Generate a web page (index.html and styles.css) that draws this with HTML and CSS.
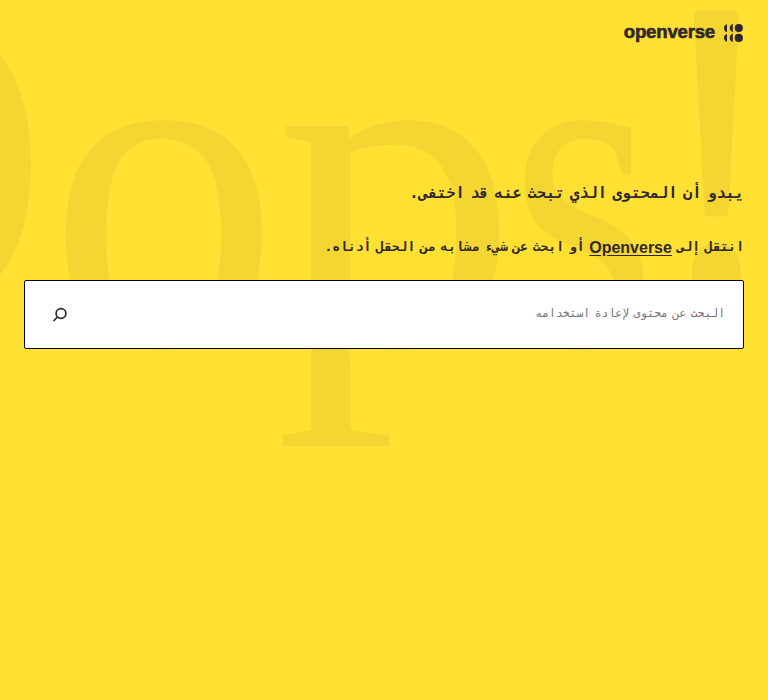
FILE: index.html
```html
<!DOCTYPE html>
<html lang="ar" dir="rtl">
<head>
<meta charset="utf-8">
<title>Openverse</title>
<link rel="stylesheet" href="styles.css">
</head>
<body>
<svg class="oops" viewBox="0 0 768 700" direction="ltr" aria-hidden="true">
  <text transform="translate(-294 321)">O</text>
  <text transform="translate(48 345) scale(.97 1)">o</text>
  <text transform="translate(275 345) scale(1.02 1)">p</text>
  <text transform="translate(509 345) scale(.8 1)">s</text>
  <text class="bang" transform="translate(660 291) scale(.85 1.05)">!</text>
</svg>
<header class="header">
  <a class="brand" href="#">
    <svg class="mark" viewBox="0 0 20 18" aria-hidden="true">
      <path d="M4 0.2a4.1 4.1 0 0 0 0 7.9zM4 9.9a4.1 4.1 0 0 0 0 7.9zM9.8 0a4.3 4.3 0 0 0 0 8.2zM9.8 9.8a4.3 4.3 0 0 0 0 8.2z"/>
      <circle cx="15.8" cy="4.1" r="4.1"/><circle cx="15.8" cy="13.9" r="4.1"/>
    </svg>
    <span class="wordmark">openverse</span>
  </a>
</header>
<main class="content">
  <h1 class="title">يبدو أن المحتوى الذي تبحث عنه قد اختفى.</h1>
  <p class="hint">انتقل إلى <a href="#">Openverse</a> أو ابحث عن شيء مشابه من الحقل أدناه.</p>
  <form class="search">
    <input type="search" placeholder="البحث عن محتوى لإعادة استخدامه">
    <button type="button" aria-label="بحث">
      <svg viewBox="0 0 16 16"><circle cx="9" cy="6.5" r="4.9"/><path d="M5.5 10 1.5 14"/></svg>
    </button>
  </form>
</main>
</body>
</html>
```
FILE: styles.css
```css
* { box-sizing: border-box; }

body {
  margin: 0;
  height: 700px;
  overflow: hidden;
  background: #ffe033;
  color: #30272e;
  font-family: "DejaVu Sans Mono", monospace;
}

.oops {
  position: absolute;
  inset: 0;
  width: 768px;
  height: 700px;
  z-index: -1;
  font: 477px "Liberation Serif", serif;
  fill: #f3d632;
}

.bang {
  font-size: 400px;
  stroke: #f3d632;
  stroke-width: 10px;
  stroke-linejoin: round;
}

.header {
  height: 66px;
  padding: 24px 25px 0;
}

.brand {
  display: flex;
  gap: 8px;
  color: inherit;
  text-decoration: none;
}

.mark {
  width: 20px;
  height: 18px;
  fill: currentColor;
}

.wordmark {
  font: 700 18.6px/16px "Liberation Sans", sans-serif;
  letter-spacing: -.2px;
  -webkit-text-stroke: .6px currentColor;
}

.content { padding: 115px 24px 0; }

.title {
  margin: 0;
  font-size: 15.4px;
  line-height: 24px;
  font-weight: 700;
  word-spacing: -3.8px;
}

.hint {
  margin: 30px 0 21px;
  font-size: 13px;
  line-height: 24px;
  font-weight: 700;
  word-spacing: -3.1px;
}

.hint a {
  position: relative;
  top: 2px;
  color: inherit;
  font: 700 16px/20px "Liberation Sans", sans-serif;
  text-underline-offset: 2px;
}

.search {
  display: flex;
  align-items: center;
  height: 69px;
  padding: 0 18px 0 19px;
  background: #fff;
  border: 1px solid #000;
  border-radius: 2px;
}

.search input {
  flex: 1;
  min-width: 0;
  padding: 0 0 4px;
  border: 0;
  outline: 0;
  background: none;
  font: 11.4px "DejaVu Sans Mono", monospace;
  word-spacing: -2.3px;
}

.search input::placeholder { color: #767076; }

.search button {
  width: 32px;
  height: 32px;
  padding: 8px;
  border: 0;
  background: none;
}

.search svg {
  display: block;
  width: 16px;
  height: 16px;
  fill: none;
  stroke: #30272e;
  stroke-width: 1.7;
}
```
